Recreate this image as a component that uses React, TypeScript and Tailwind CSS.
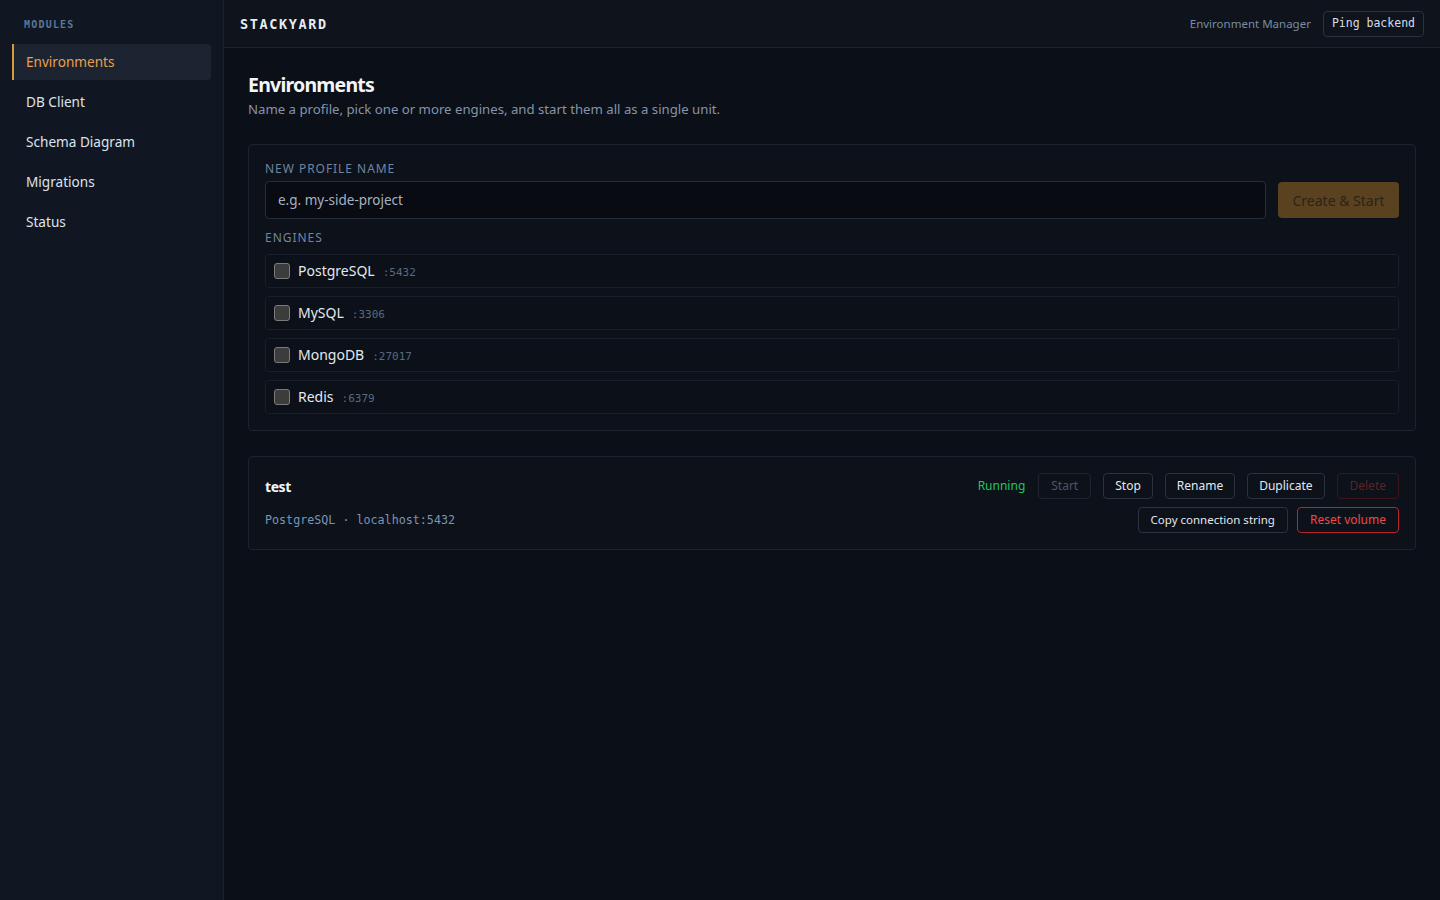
import React from "react";

const sans = { fontFamily: '"Noto Sans", "Open Sans", sans-serif' };
const mono = { fontFamily: '"DejaVu Sans Mono", "Liberation Mono", monospace' };

const navItems = ["Environments", "DB Client", "Schema Diagram", "Migrations", "Status"];
const engines = [
  { name: "PostgreSQL", port: ":5432" },
  { name: "MySQL", port: ":3306" },
  { name: "MongoDB", port: ":27017" },
  { name: "Redis", port: ":6379" },
];

export default function App() {
  return (
    <div className="flex h-[900px] w-[1440px] bg-[#0b0f17] text-[#e5e9f0]" style={sans}>
      <aside className="flex w-[224px] shrink-0 flex-col border-r border-[#1c2230] bg-[#111722] px-3">
        <div className="pl-3 pt-[17px] text-[10px] font-bold tracking-[0.12em] text-[#5a7896]" style={mono}>
          MODULES
        </div>
        <nav className="mt-[12px] flex flex-col gap-1">
          {navItems.map((item, i) => (
            <div
              key={item}
              className={
                i === 0
                  ? "flex h-9 items-center rounded-r-[3px] border-l-2 border-[#d99a3e] bg-[#1c2331] pl-3 text-[13.6px] text-[#eaa04b]"
                  : "flex h-9 items-center pl-[14px] text-[13.6px] text-[#dde3ec]"
              }
            >
              {item}
            </div>
          ))}
        </nav>
      </aside>
      <div className="flex min-w-0 flex-1 flex-col">
        <header className="flex h-12 shrink-0 items-center justify-between border-b border-[#1c2230] bg-[#0e131c] pl-4 pr-4">
          <div className="pt-[2px] text-[13.5px] font-bold tracking-[0.12em] text-[#e8ecf2]" style={mono}>
            STACKYARD
          </div>
          <div className="flex items-center gap-3">
            <span className="text-[11.5px] text-[#7a8ca3]">Environment Manager</span>
            <button
              className="h-[26px] rounded border border-[#2a3240] bg-[#0e131c] px-2 text-[11.5px] text-[#d6dde7]"
              style={mono}
            >
              Ping backend
            </button>
          </div>
        </header>
        <main className="flex flex-col px-6 pt-[23px]">
          <h1 className="text-[19.5px] font-bold leading-7 tracking-[-0.04em] text-[#f3f5f8]">Environments</h1>
          <p className="text-[13.2px] leading-5 text-[#8594a8]">
            Name a profile, pick one or more engines, and start them all as a single unit.
          </p>

          <section className="mt-[25px] rounded border border-[#1c2230] bg-[#0c111a] px-4 pb-4 pt-[15px]">
            <div className="text-[12px] tracking-[0.08em] text-[#7185a0]">NEW PROFILE NAME</div>
            <div className="mt-[3px] flex items-center gap-3">
              <div className="flex h-[38px] flex-1 items-center rounded border border-[#262e3c] bg-[#080b11] px-3 text-[13.5px] text-[#a6b2c3]">
                e.g. my-side-project
              </div>
              <button className="h-9 w-[121px] rounded bg-[#5a4120] text-[14px] text-[#2a2418]">Create &amp; Start</button>
            </div>
            <div className="mt-[10px] text-[12px] tracking-[0.08em] text-[#7185a0]">ENGINES</div>
            <div className="mt-[7px] flex flex-col gap-2">
              {engines.map((e) => (
                <div
                  key={e.name}
                  className="flex h-[34px] items-center rounded border border-[#181e2a] bg-[#0b1019] px-2"
                >
                  <span className="h-4 w-4 shrink-0 rounded-[3px] border border-[#7a7a7a] bg-[#3c3c3c]" />
                  <span className="ml-2 flex items-baseline">
                    <span className="text-[14px] text-[#e3e8ef]">{e.name}</span>
                    <span className="ml-2 text-[11px] text-[#5a6a7e]" style={mono}>
                      {e.port}
                    </span>
                  </span>
                </div>
              ))}
            </div>
          </section>

          <section className="mt-[25px] flex items-start justify-between rounded border border-[#1c2230] bg-[#0c111a] px-4 pb-4 pt-4">
            <div className="flex flex-col">
              <div className="flex h-[26px] items-center text-[14px] font-bold tracking-[-0.03em] text-[#f3f5f8]">test</div>
              <div className="mt-2 flex h-[26px] items-center pt-[2px] text-[11.7px] text-[#7b95b4]" style={mono}>
                PostgreSQL · localhost:5432
              </div>
            </div>
            <div className="flex flex-col items-end gap-2">
              <div className="flex items-center gap-[12px]">
                <span className="mr-[1px] text-[12px] text-[#22c55e]">Running</span>
                <button className="h-[26px] rounded border border-[#1e2430] px-[12px] text-[12px] text-[#4b5563]">Start</button>
                <button className="h-[26px] rounded border border-[#2a3240] px-[11px] text-[12px] text-[#e3e8ef]">Stop</button>
                <button className="h-[26px] rounded border border-[#2a3240] px-[11px] text-[12px] text-[#e3e8ef]">Rename</button>
                <button className="h-[26px] rounded border border-[#2a3240] px-[11px] text-[12px] text-[#e3e8ef]">Duplicate</button>
                <button className="h-[26px] rounded border border-[#3a171b] px-3 text-[12px] text-[#5e2227]">Delete</button>
              </div>
              <div className="flex items-center gap-[9px]">
                <button className="h-[26px] rounded border border-[#2a3240] px-3 text-[11.5px] text-[#e3e8ef]">
                  Copy connection string
                </button>
                <button className="h-[26px] rounded border border-[#b8262b] px-3 text-[12px] text-[#f04848]">
                  Reset volume
                </button>
              </div>
            </div>
          </section>
        </main>
      </div>
    </div>
  );
}
